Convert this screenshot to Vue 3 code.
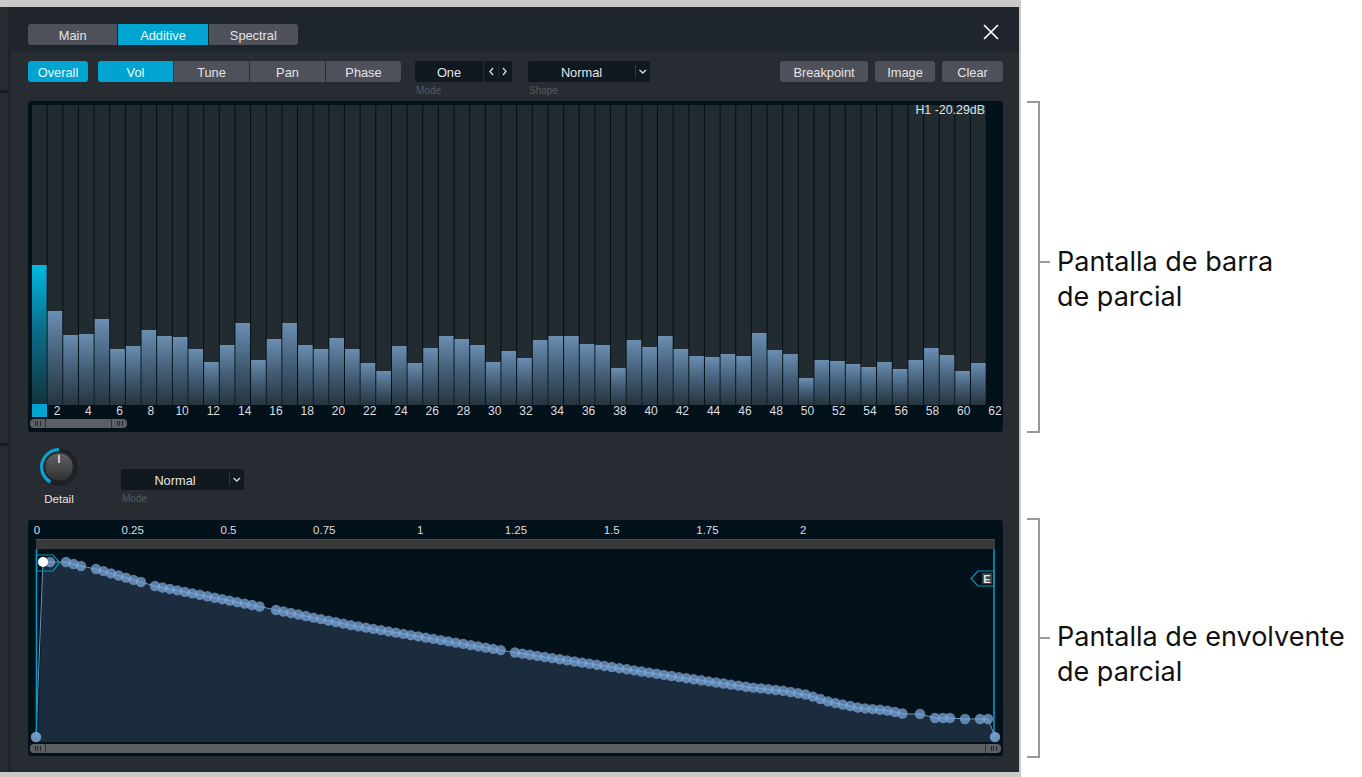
<script setup>
import { computed } from 'vue';

const tabs = ['Main', 'Additive', 'Spectral'];
const params = ['Vol', 'Tune', 'Pan', 'Phase'];

// y of the top of each partial bar, read off the display
const barTops = [
  265, 311, 335, 334, 319, 349, 346, 330, 336, 337, 349, 362, 345, 323, 360, 339, 323, 345, 349, 338,
  349, 363, 371, 346, 363, 348, 336, 339, 345, 362, 351, 358, 340, 336, 336, 344, 345, 368, 340, 347,
  336, 349, 356, 357, 354, 356, 333, 350, 354, 378, 360, 361, 364, 367, 362, 369, 360, 348, 355, 371, 363
];
const barPitch = 15.65;
const barBottom = 405;
const bars = computed(() => barTops.map((top, i) => ({ x: 32 + i * barPitch, top, h: barBottom - top })));
const partialLabels = Array.from({ length: 31 }, (_, i) => (i + 1) * 2);
const rulerLabels = ['0', '0.25', '0.5', '0.75', '1', '1.25', '1.5', '1.75', '2'];

// envelope outline as x,y pairs in page coordinates
const curve = [
  [43, 562], [66, 562], [81, 566], [96, 569], [141, 582], [155, 586], [262, 607], [276, 610], [350, 625],
  [500, 650], [515, 652.5], [678, 677], [748, 687], [785, 691], [808, 695], [830, 702], [860, 708],
  [883, 710], [890, 711], [905, 714], [920, 714], [935, 718], [950, 718], [965, 719], [988, 719]
];

const yAt = (x) => {
  for (let i = 1; i < curve.length; i++) {
    const [x0, y0] = curve[i - 1];
    const [x1, y1] = curve[i];
    if (x <= x1) return y0 + ((y1 - y0) * (x - x0)) / (x1 - x0);
  }
  return curve[curve.length - 1][1];
};

const run = (from, to, step) => {
  const out = [];
  for (let x = from; x <= to + 0.1; x += step) out.push(x);
  return out;
};

const dots = computed(() =>
  [
    50, 66, 73.5, 81,
    ...run(96, 141, 7.5),
    ...run(155, 262, 7.47),
    ...run(276, 500.7, 7.49),
    ...run(515, 905, 7.45),
    920, 935, 943, 950, 965, 980, 988
  ].map(x => ({ x, y: yAt(x) }))
);

const linePoints = computed(() => ['36,737', ...curve.map(p => p.join(',')), '995,737'].join(' '));
const areaPoints = computed(() => ['38,742', ...curve.map(p => p.join(',')), '994,732', '994,742'].join(' '));
</script>

<template>
  <div class="page">
    <div class="plugin">
      <div class="side">
        <div class="side-part" style="height: 83px"></div>
        <div class="side-part" style="height: 350px"></div>
        <div class="side-part side-last"></div>
      </div>

      <div class="main">
        <div class="header">
          <div class="segments tabs">
            <button v-for="t in tabs" :key="t" class="btn tab" :class="{ on: t === 'Additive' }">{{ t }}</button>
          </div>
          <svg class="close" width="16" height="16" viewBox="0 0 16 16">
            <path d="M1 1 L15 15 M15 1 L1 15" stroke="#fff" stroke-width="1.7" fill="none" />
          </svg>
        </div>

        <div class="content">
          <div class="tools">
            <button class="btn overall on">Overall</button>
            <div class="segments params">
              <button v-for="p in params" :key="p" class="btn param" :class="{ on: p === 'Vol' }">{{ p }}</button>
            </div>
            <div class="field mode-field">
              <div class="stepper">
                <div class="dark-box one">One</div>
                <div class="dark-box arrows">
                  <svg width="28" height="21" viewBox="0 0 28 21">
                    <path d="M9 7 L6 10.5 L9 14 M19 7 L22 10.5 L19 14" stroke="#d5d7d9" stroke-width="1.4" fill="none" />
                    <path d="M14.5 4 V17" stroke="#20282e" />
                  </svg>
                </div>
              </div>
              <span class="hint">Mode</span>
            </div>
            <div class="field shape-field">
              <div class="dark-box select shape-select">
                <span class="select-text">Normal</span>
                <svg class="chev" width="15" height="21" viewBox="0 0 15 21">
                  <path d="M0.5 4 V17" stroke="#30383e" />
                  <path d="M4.5 9 L7.8 12 L11 9" stroke="#d5d7d9" stroke-width="1.4" fill="none" />
                </svg>
              </div>
              <span class="hint">Shape</span>
            </div>
            <div class="actions">
              <button class="btn action breakpoint">Breakpoint</button>
              <button class="btn action image">Image</button>
              <button class="btn action clear">Clear</button>
            </div>
          </div>

          <div class="panel bar-panel">
            <span class="readout">H1 -20.29dB</span>
            <svg class="bars" width="975" height="300" viewBox="28 105 975 300">
              <defs>
                <linearGradient id="barFill" x1="0" y1="0" x2="0" y2="1">
                  <stop offset="0" stop-color="#6b8eb2" />
                  <stop offset="0.45" stop-color="#47627c" />
                  <stop offset="1" stop-color="#26353e" />
                </linearGradient>
                <linearGradient id="barSelected" x1="0" y1="0" x2="0" y2="1">
                  <stop offset="0" stop-color="#00b9e2" />
                  <stop offset="0.45" stop-color="#0a6f8c" />
                  <stop offset="1" stop-color="#13333d" />
                </linearGradient>
              </defs>
              <g v-for="(b, i) in bars" :key="i">
                <rect :x="b.x" y="105" width="14.6" height="300" fill="#222c30" />
                <rect :x="b.x" :y="b.top" width="14.6" :height="b.h" :fill="i === 0 ? 'url(#barSelected)' : 'url(#barFill)'" />
              </g>
            </svg>
            <div class="partial-labels">
              <span class="sel-square"></span>
              <span v-for="n in partialLabels" :key="n" class="partial-label">{{ n }}</span>
            </div>
            <div class="scroll short">
              <span class="grip"><i></i><i></i><i></i></span>
              <span class="grip grip-end"><i></i><i></i><i></i></span>
            </div>
          </div>

          <div class="middle">
            <div class="knob-wrap">
              <svg width="38" height="38" viewBox="0 0 38 38">
                <defs>
                  <linearGradient id="knobFill" x1="0" y1="0" x2="0" y2="1">
                    <stop offset="0" stop-color="#626264" />
                    <stop offset="1" stop-color="#2e2f31" />
                  </linearGradient>
                </defs>
                <circle cx="19" cy="19" r="17.3" fill="none" stroke="#1d2125" stroke-width="3.2" />
                <path d="M10.3 34 A17.3 17.3 0 0 1 19 1.7" fill="none" stroke="#0aa3cf" stroke-width="3.2" />
                <circle cx="19" cy="19" r="14.5" fill="url(#knobFill)" stroke="#17191c" />
                <path d="M19 7 V15" stroke="#f1f1f1" stroke-width="1.5" />
              </svg>
              <span class="knob-label">Detail</span>
            </div>
            <div class="field detail-mode">
              <div class="dark-box select detail-select">
                <span class="select-text">Normal</span>
                <svg class="chev" width="15" height="21" viewBox="0 0 15 21">
                  <path d="M0.5 4 V17" stroke="#30383e" />
                  <path d="M4.5 9 L7.8 12 L11 9" stroke="#d5d7d9" stroke-width="1.4" fill="none" />
                </svg>
              </div>
              <span class="hint">Mode</span>
            </div>
          </div>

          <div class="panel env-panel">
            <div class="ruler">
              <span v-for="r in rulerLabels" :key="r" class="tick">{{ r }}</span>
            </div>
            <div class="time-bar"></div>
            <svg class="plot" width="975" height="195" viewBox="28 549 975 195">
              <polygon :points="areaPoints" fill="#1a2c3e" />
              <polyline :points="linePoints" fill="none" stroke="#6a94c2" stroke-width="1" />
              <path d="M36.5 549 V737 M994 549 V737" stroke="#0a98be" stroke-width="1.6" fill="none" />
              <polygon points="36.5,555 53,555 59.5,562.5 53,571 36.5,571" fill="none" stroke="#0a98be" stroke-width="1.2" />
              <polygon points="994,571 978,571 971,578.5 978,586 994,586" fill="none" stroke="#0a98be" stroke-width="1.2" />
              <rect x="982" y="573" width="10" height="11" fill="#3b4248" />
              <text x="987" y="582.5" text-anchor="middle" class="flag-text">E</text>
              <circle v-for="(d, i) in dots" :key="i" :cx="d.x" :cy="d.y" r="5.2" fill="#7fa9db" fill-opacity="0.72" />
              <circle cx="43" cy="562" r="5" fill="#fff" />
              <circle cx="36" cy="737" r="5.2" fill="#7fa9db" fill-opacity="0.85" />
              <circle cx="995" cy="737" r="5.2" fill="#7fa9db" fill-opacity="0.85" />
            </svg>
            <div class="scroll wide">
              <span class="grip"><i></i><i></i><i></i></span>
              <span class="grip grip-end"><i></i><i></i><i></i></span>
            </div>
          </div>
        </div>
      </div>
    </div>

    <div class="notes">
      <div class="note note-bar">
        <div class="bracket"></div>
        <p class="note-text">Pantalla de barra<br />de parcial</p>
      </div>
      <div class="note note-env">
        <div class="bracket"></div>
        <p class="note-text">Pantalla de envolvente<br />de parcial</p>
      </div>
    </div>
  </div>
</template>

<style scoped>
.page { display: flex; width: 1362px; height: 777px; overflow: hidden; background: #fff; font-family: "Liberation Sans", Arial, sans-serif; }

.plugin { display: flex; box-sizing: border-box; width: 1021px; height: 777px; border-top: 7px solid #c9c9c9; border-right: 2px solid #c9c9c9; border-bottom: 5px solid #c9c9c9; background: #272c32; }
.side { display: flex; flex-direction: column; gap: 3px; width: 8px; background: #191d22; border-right: 3px solid #1f2329; }
.side-part { background: #272c32; }
.side-last { flex: 1; }

.main { flex: 1; display: flex; flex-direction: column; min-width: 0; }
.header { display: flex; justify-content: space-between; align-items: flex-start; box-sizing: border-box; height: 45px; padding: 17px 20px 0 17px; background: #1f252c; }
.content { flex: 1; padding: 9px 16px 0 17px; }

.btn { display: block; height: 21px; padding: 0; border: none; border-radius: 3px; background: #4e5159; color: #e4e5e7; font-family: inherit; font-size: 12.8px; line-height: 23px; text-align: center; }
.btn.on { background: #00a4d0; color: #eef8fb; }

.segments { display: flex; gap: 1px; }
.segments .btn { border-radius: 0; }
.segments .btn:first-child { border-radius: 3px 0 0 3px; }
.segments .btn:last-child { border-radius: 0 3px 3px 0; }
.tab { width: 89.33px; }
.param { width: 75px; }

.tools { display: flex; align-items: flex-start; height: 40px; }
.overall { width: 60px; }
.params { margin-left: 10px; }
.field { display: flex; flex-direction: column; }
.mode-field { margin-left: 14px; }
.shape-field { margin-left: 16px; }
.stepper { display: flex; gap: 1px; }
.dark-box { height: 21px; background: #0f191f; border-radius: 2px; color: #e4e5e7; font-size: 12.8px; line-height: 23px; text-align: center; }
.one { width: 68px; }
.arrows { width: 28px; }
.select { display: flex; }
.select-text { flex: 1; }
.chev { flex: none; }
.shape-select { width: 122px; }
.detail-select { width: 123px; }
.hint { margin: 3px 0 0 1px; color: #565a60; font-size: 10px; line-height: 11px; }
.actions { display: flex; gap: 7px; margin-left: auto; }
.breakpoint { width: 88px; }
.image { width: 60px; }
.clear { width: 61px; }

.panel { position: relative; border-radius: 3px; background: #03111a; }
.bar-panel { height: 331px; padding-top: 4px; box-sizing: border-box; }
.readout { position: absolute; z-index: 1; top: 1px; right: 18px; color: #dfe1e3; font-size: 12.4px; line-height: 16px; }
.bars { display: block; }

.partial-labels { display: flex; align-items: center; height: 13px; margin-top: -1px; padding-left: 4px; color: #dcdee0; font-size: 12px; line-height: 14px; }
.sel-square { flex: none; width: 15px; height: 13px; background: #00a4d0; }
.partial-label { flex: none; width: 31.27px; text-align: center; }
.partial-labels .sel-square + .partial-label { margin-left: -5.6px; }

.scroll { display: flex; justify-content: space-between; box-sizing: border-box; height: 9px; margin: 2px 0 0 2px; border-radius: 4px; background: #5c5f63; }
.short { width: 97px; }
.wide { width: 971px; margin-top: 0; }
.grip { display: flex; justify-content: center; align-items: center; gap: 1.5px; width: 15px; border-right: 1px solid #2e3236; }
.grip-end { border-right: none; border-left: 1px solid #2e3236; }
.grip i { display: block; width: 1px; height: 5px; background: #26292c; }

.middle { display: flex; align-items: flex-start; height: 88px; padding: 16px 0 0 12px; box-sizing: border-box; }
.knob-wrap { display: flex; flex-direction: column; align-items: center; width: 38px; }
.knob-wrap svg { display: block; }
.knob-label { margin-top: 7px; color: #e4e5e7; font-size: 11.5px; line-height: 13px; }
.detail-mode { margin: 21px 0 0 43px; }

.env-panel { height: 236px; }
.ruler { display: flex; height: 19px; margin-left: -39px; color: #dcdee0; font-size: 11.5px; line-height: 21px; }
.tick { flex: none; width: 95.8px; text-align: center; }
.time-bar { height: 10px; margin: 0 8px; background: #3a3a3a; border-top: 1px solid #4a4a4a; box-sizing: border-box; }
.plot { display: block; overflow: visible; }
.flag-text { fill: #e6e8ea; font-family: "Liberation Sans", Arial, sans-serif; font-size: 11px; font-weight: 700; }

.notes { padding-left: 6px; }
.note { display: flex; }
.note-bar { margin-top: 101px; }
.note-env { margin-top: 85px; }
.bracket { position: relative; flex: none; box-sizing: border-box; width: 13px; border: 2px solid #999; border-left: none; }
.bracket::after { content: ""; position: absolute; left: 100%; width: 12px; height: 2px; background: #999; }
.note-bar .bracket { height: 332px; }
.note-bar .bracket::after { top: 158px; }
.note-env .bracket { height: 240px; }
.note-env .bracket::after { top: 117px; }
.note-text { margin: 0 0 0 17px; color: #111; font-family: Inter, "Liberation Sans", sans-serif; font-size: 27px; line-height: 35px; white-space: nowrap; }
.note-bar .note-text { margin-top: 143px; }
.note-env .note-text { margin-top: 101px; }
</style>
<style>
html, body { margin: 0; background: #fff; }
</style>
